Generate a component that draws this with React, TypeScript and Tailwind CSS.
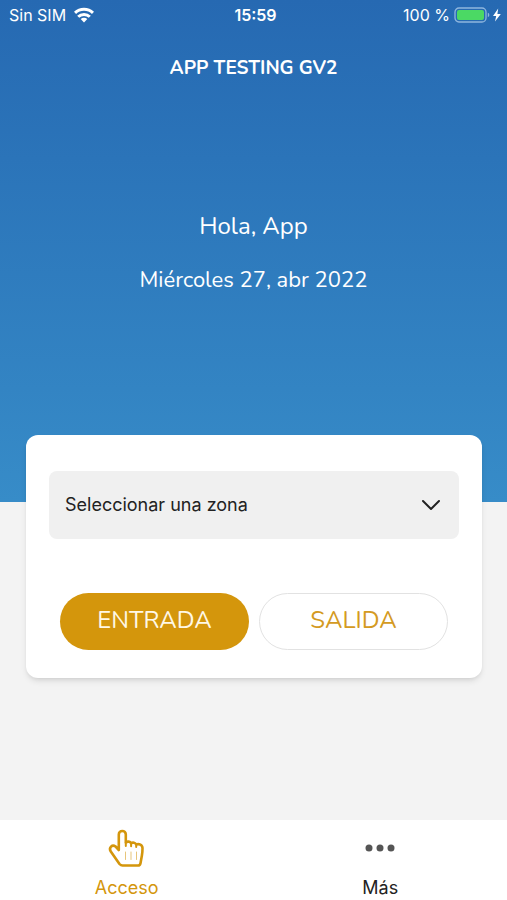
import { useState } from 'react';

type Tab = 'acceso' | 'mas';

function StatusBar() {
  return (
    <div className="grid grid-cols-3 items-center h-[30px] pl-[9px] pr-[5px] text-base font-['Inter','Liberation_Sans',sans-serif]">
      <div className="flex items-center gap-2">
        <span>Sin SIM</span>
        <svg className="w-5 h-4" viewBox="0 0 20 16" fill="none" stroke="currentColor" strokeWidth="3" aria-hidden="true">
          <path d="M1 5.8c5-4.800 13-4.800 18 0" />
          <path d="M4.2 9.8c3.2-3.2 8.4-3.2 11.6 0" />
          <path d="M10 15.4 6.7 12c1.8-1.7 4.8-1.7 6.6 0z" fill="currentColor" stroke="none" />
        </svg>
      </div>
      <span className="text-center font-semibold">15:59</span>
      <div className="flex items-center justify-end gap-1 whitespace-nowrap">
        <span>100 %</span>
        {/* Batería cargando */}
        <svg className="w-12 h-4 shrink-0" viewBox="0 0 48 16" aria-hidden="true">
          <rect x="1" y="1" width="31" height="14" rx="4" fill="none" stroke="#8fb6de" strokeWidth="1.3" />
          <rect x="3" y="3" width="27" height="10" rx="2" fill="#4bd964" />
          <path d="M33.8 5.8c2 .6 2 3.8 0 4.4z" fill="#8fb6de" />
          <path d="M44.2 1.5 39 9h3.2l-1.2 5.5L46.8 7h-3.4z" fill="#fff" />
        </svg>
      </div>
    </div>
  );
}

function HandIcon() {
  return (
    <svg className="size-10" viewBox="0 0 40 40" fill="none" stroke="currentColor" strokeLinecap="round" strokeLinejoin="round" aria-hidden="true">
      <path
        strokeWidth="2.6"
        d="M11.8 22V6.500a3.500 3.500 0 0 1 7 0V14.500c1.600-1.400 4.400-1.200 5.300.8 1.600-1.200 4.300-.7 5.100 1.200 2.700-1 6.300.2 6.300 3.800 0 2.600-.1 4.700-.6 7.300l-1.400 7.600c-.3 1.500-1 2.300-2.500 2.300H15.500c-1.300 0-2.100-.5-3-1.500L3.800 23.500C1.400 19.500 5.200 16 8.600 18.500l3.200 3.500"
      />
      <path strokeWidth="1" strokeOpacity="0.55" d="M18.500 24v7.500M24 24v7.500M29.500 24v7.500" />
      <path strokeWidth="2" d="M18.800 14.500V18M24.100 15.300v3M29.200 16.500v2.500" />
    </svg>
  );
}

export default function App() {
  const [tab, setTab] = useState<Tab>('acceso');

  return (
    <div className="min-h-screen flex flex-col bg-[#f3f3f3] font-['Nunito','Lato',sans-serif]">
      <header className="bg-linear-to-b from-[#2669b2] to-[#378cc8] text-white pb-[210px]">
        <StatusBar />
        <h1 className="pt-[26px] text-center text-[19px] leading-6 font-bold">APP TESTING GV2</h1>
        <div className="pt-[130px] text-center">
          <p className="text-2xl leading-8">Hola, App</p>
          <p className="pt-[26px] text-[22px] leading-6">Miércoles 27, abr 2022</p>
        </div>
      </header>

      <main className="flex-1 pl-[26px] pr-[25px] pb-6">
        <div className="-mt-[67px] rounded-xl bg-white px-[23px] pt-9 pb-7 shadow-md">
          {/* Selector de zona */}
          <div className="relative">
            <select
              aria-label="Zona"
              className="w-full h-[68px] appearance-none rounded-lg bg-[#f0f0f0] pl-4 pr-12 text-lg text-[#222] font-['Inter','Liberation_Sans',sans-serif]"
            >
              <option>Seleccionar una zona</option>
            </select>
            <svg
              className="pointer-events-none absolute right-[18px] top-1/2 h-3 w-5 -translate-y-1/2"
              viewBox="0 0 20 12"
              fill="none"
              stroke="#222"
              strokeWidth="2"
              strokeLinecap="round"
              strokeLinejoin="round"
              aria-hidden="true"
            >
              <path d="m2 2 8 8 8-8" />
            </svg>
          </div>

          {/* Botones de fichaje */}
          <div className="mt-[54px] grid grid-cols-2 gap-[10px] px-[11px]">
            <button type="button" className="h-[57px] rounded-full bg-[#d4960c] pb-1 text-2xl text-[#fff8e6]">
              ENTRADA
            </button>
            <button type="button" className="h-[57px] rounded-full border border-[#e2e2e2] bg-white pb-1 text-2xl text-[#d49a22]">
              SALIDA
            </button>
          </div>
        </div>
      </main>

      <nav className="grid grid-cols-2 bg-white text-lg leading-6 font-['Inter','Liberation_Sans',sans-serif]">
        <button
          type="button"
          onClick={() => setTab('acceso')}
          className={tab === 'acceso' ? 'flex flex-col items-center pt-2 text-[#d4960c]' : 'flex flex-col items-center pt-2 text-[#222]'}
        >
          <HandIcon />
          <span className="pt-2">Acceso</span>
        </button>
        <button
          type="button"
          onClick={() => setTab('mas')}
          className={tab === 'mas' ? 'flex flex-col items-center pt-2 text-[#d4960c]' : 'flex flex-col items-center pt-2 text-[#222]'}
        >
          <svg className="size-10" viewBox="0 0 40 40" fill="#555" aria-hidden="true">
            <circle cx="9" cy="20" r="3.5" />
            <circle cx="20" cy="20" r="3.5" />
            <circle cx="31" cy="20" r="3.5" />
          </svg>
          <span className="pt-2">Más</span>
        </button>
      </nav>
    </div>
  );
}
